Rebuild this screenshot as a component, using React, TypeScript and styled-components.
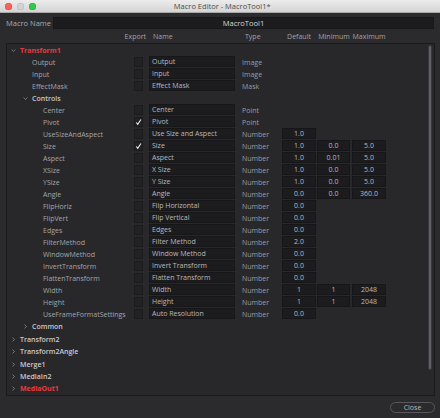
import React from 'react'
import styled, { createGlobalStyle } from 'styled-components'

const GlobalStyle = createGlobalStyle`
  html, body {
    margin: 0;
    padding: 0;
    background: #2b2b2e;
  }
  body {
    font-family: "Open Sans", "Liberation Sans", sans-serif;
    -webkit-font-smoothing: antialiased;
  }
  * {
    box-sizing: border-box;
  }
`

// Styled Components
const Window = styled.div`
  width: 440px;
  height: 418px;
  display: flex;
  flex-direction: column;
  background: #2b2b2e;
  overflow: hidden;
  color: #b4b4b6;
  font-size: 7px;
`

const TitleBar = styled.div`
  flex: none;
  height: 13px;
  display: grid;
  grid-template-columns: 1fr auto 1fr;
  align-items: center;
  padding-left: 4.5px;
  background: linear-gradient(#ececec, #d4d4d4);
  border-bottom: 1px solid #a9a9a9;
`

const Lights = styled.div`
  display: flex;
  gap: 5px;
`

const Light = styled.span<{ $color: string; $ring: string }>`
  width: 7px;
  height: 7px;
  border-radius: 50%;
  background: ${(p) => p.$color};
  box-shadow: inset 0 0 0 0.5px ${(p) => p.$ring};
`

const Title = styled.div`
  font-size: 7.5px;
  color: #4b4b4b;
  white-space: nowrap;
`

const MacroNameRow = styled.div`
  flex: none;
  display: flex;
  align-items: center;
  margin-top: 4px;
  height: 12px;
  padding: 0 6px;
`

const MacroNameLabel = styled.div`
  width: 47px;
  font-size: 7.5px;
  color: #a9a9ac;
`

const MacroNameInput = styled.div`
  flex: 1;
  height: 12px;
  background: #1c1c1e;
  border: 1px solid #18181a;
  color: #d6d6d8;
  font-size: 7.5px;
  display: flex;
  align-items: center;
  justify-content: center;
`

const columns = '127px 15px 93px 40px 35px 35px 35px'

const HeaderRow = styled.div`
  flex: none;
  height: 14px;
  display: grid;
  grid-template-columns: ${columns};
  align-items: center;
  padding-left: 7px;
  color: #a4a4a7;
`

const HeadCell = styled.div<{ $align?: string; $pad?: number; $span?: number }>`
  grid-column: span ${(p) => p.$span ?? 1};
  width: ${(p) => (p.$align === 'center' ? '34px' : 'auto')};
  text-align: ${(p) => p.$align ?? 'left'};
  padding-left: ${(p) => (p.$align === 'left' || !p.$align ? p.$pad ?? 0 : 0)}px;
  padding-right: ${(p) => (p.$align === 'right' ? p.$pad ?? 0 : 0)}px;
  white-space: nowrap;
`

const Panel = styled.div`
  flex: 1;
  position: relative;
  margin: 0 5px 0 6px;
  background: #28282b;
  border: 1px solid #1a1a1c;
  border-radius: 1px;
`

const ScrollThumb = styled.div`
  position: absolute;
  right: 2px;
  top: 1px;
  bottom: 25px;
  width: 4px;
  border-radius: 2px;
  background: #606066;
  border: 1px solid #3a3a3e;
`

const Row = styled.div<{ $h: number }>`
  height: ${(p) => p.$h}px;
  display: grid;
  grid-template-columns: ${columns};
  align-items: center;
`

const TreeLabel = styled.div<{ $indent: number; $tone: 'red' | 'group' | 'leaf' }>`
  display: flex;
  align-items: center;
  padding-left: ${(p) => p.$indent}px;
  white-space: nowrap;
  font-weight: ${(p) => (p.$tone === 'red' ? 700 : p.$tone === 'group' ? 600 : 400)};
  color: ${(p) =>
    p.$tone === 'red' ? '#e8393c' : p.$tone === 'group' ? '#c9c9cc' : '#a5a5a8'};
`

const Chevron = styled.span`
  width: 11px;
  flex: none;
  display: flex;
  align-items: center;
  padding-left: 2px;
`

const CheckBox = styled.div`
  align-self: start;
  width: 9px;
  height: 10px;
  margin-top: 1px;
  background: #222224;
  border: 1px solid #1b1b1d;
  display: flex;
  align-items: center;
  justify-content: center;
`

const Field = styled.div<{ $w: number; $center?: boolean }>`
  align-self: start;
  width: ${(p) => p.$w}px;
  height: 11px;
  background: #1c1c1e;
  border: 1px solid #17171a;
  color: #b9b9bc;
  display: flex;
  align-items: center;
  justify-content: ${(p) => (p.$center ? 'center' : 'flex-start')};
  padding-left: ${(p) => (p.$center ? 0 : 2)}px;
  white-space: nowrap;
  overflow: hidden;
`

const TypeText = styled.div`
  color: #9c9c9f;
`

const Footer = styled.div`
  flex: none;
  height: 23px;
  display: flex;
  justify-content: flex-end;
  align-items: center;
  padding-right: 5px;
`

const CloseButton = styled.button`
  width: 45px;
  height: 11px;
  padding: 0;
  border-radius: 6px;
  border: 1px solid #58585c;
  background: #2b2b2e;
  color: #b8b8ba;
  font-family: inherit;
  font-size: 7px;
  display: flex;
  align-items: center;
  justify-content: center;
`

// DATA
type Item = {
  label: string
  level: number
  group?: boolean
  open?: boolean
  red?: boolean
  checked?: boolean
  name?: string
  type?: string
  values?: string[]
  h?: number
}

const items: Item[] = [
  { label: 'Transform1', level: 0, group: true, open: true, red: true },
  { label: 'Output', level: 1, name: 'Output', type: 'Image' },
  { label: 'Input', level: 1, name: 'Input', type: 'Image' },
  { label: 'EffectMask', level: 1, name: 'Effect Mask', type: 'Mask' },
  { label: 'Controls', level: 1, group: true, open: true },
  { label: 'Center', level: 2, name: 'Center', type: 'Point' },
  { label: 'Pivot', level: 2, checked: true, name: 'Pivot', type: 'Point' },
  { label: 'UseSizeAndAspect', level: 2, name: 'Use Size and Aspect', type: 'Number', values: ['1.0'] },
  { label: 'Size', level: 2, checked: true, name: 'Size', type: 'Number', values: ['1.0', '0.0', '5.0'] },
  { label: 'Aspect', level: 2, name: 'Aspect', type: 'Number', values: ['1.0', '0.01', '5.0'] },
  { label: 'XSize', level: 2, name: 'X Size', type: 'Number', values: ['1.0', '0.0', '5.0'] },
  { label: 'YSize', level: 2, name: 'Y Size', type: 'Number', values: ['1.0', '0.0', '5.0'] },
  { label: 'Angle', level: 2, name: 'Angle', type: 'Number', values: ['0.0', '0.0', '360.0'] },
  { label: 'FlipHoriz', level: 2, name: 'Flip Horizontal', type: 'Number', values: ['0.0'] },
  { label: 'FlipVert', level: 2, name: 'Flip Vertical', type: 'Number', values: ['0.0'] },
  { label: 'Edges', level: 2, name: 'Edges', type: 'Number', values: ['0.0'] },
  { label: 'FilterMethod', level: 2, name: 'Filter Method', type: 'Number', values: ['2.0'] },
  { label: 'WindowMethod', level: 2, name: 'Window Method', type: 'Number', values: ['0.0'] },
  { label: 'InvertTransform', level: 2, name: 'Invert Transform', type: 'Number', values: ['0.0'] },
  { label: 'FlattenTransform', level: 2, name: 'Flatten Transform', type: 'Number', values: ['0.0'] },
  { label: 'Width', level: 2, name: 'Width', type: 'Number', values: ['1', '1', '2048'] },
  { label: 'Height', level: 2, name: 'Height', type: 'Number', values: ['1', '1', '2048'] },
  { label: 'UseFrameFormatSettings', level: 2, name: 'Auto Resolution', type: 'Number', values: ['0.0'] },
  { label: 'Common', level: 1, group: true, h: 13 },
  { label: 'Transform2', level: 0, group: true, h: 12.5 },
  { label: 'Transform2Angle', level: 0, group: true, h: 12.5 },
  { label: 'Merge1', level: 0, group: true, h: 12.5 },
  { label: 'MediaIn2', level: 0, group: true, h: 12 },
  { label: 'MediaOut1', level: 0, group: true, red: true, h: 12 },
]

const indents = [2, 14, 25]

const ChevronIcon: React.FC<{ open?: boolean }> = ({ open }) => (
  <svg width="5" height="5" viewBox="0 0 5 5">
    <path
      d={open ? 'M0.6 1.5 L2.5 3.5 L4.4 1.5' : 'M1.5 0.6 L3.5 2.5 L1.5 4.4'}
      fill="none"
      stroke="#8a8a8e"
      strokeWidth="0.8"
    />
  </svg>
)

const CheckMark: React.FC = () => (
  <svg width="8" height="8" viewBox="0 0 8 8">
    <path d="M1.4 4.6 L3.1 6.6 L6.8 1.2" fill="none" stroke="#f2f2f2" strokeWidth="1.2" />
  </svg>
)

// COMPONENT
const App: React.FC = () => {
  return (
    <Window>
      <GlobalStyle />
      <TitleBar>
        <Lights>
          <Light $color="#fc605b" $ring="#de4a45" />
          <Light $color="#d2d2d2" $ring="#b8b8b8" />
          <Light $color="#34c84a" $ring="#26a93a" />
        </Lights>
        <Title>Macro Editor - MacroTool1*</Title>
        <span />
      </TitleBar>

      <MacroNameRow>
        <MacroNameLabel>Macro Name</MacroNameLabel>
        <MacroNameInput>MacroTool1</MacroNameInput>
      </MacroNameRow>

      <HeaderRow>
        <HeadCell $span={2} $align="right" $pad={3}>
          Export
        </HeadCell>
        <HeadCell $pad={4}>Name</HeadCell>
        <HeadCell $pad={3}>Type</HeadCell>
        <HeadCell $align="center">Default</HeadCell>
        <HeadCell $align="center">Minimum</HeadCell>
        <HeadCell $align="center">Maximum</HeadCell>
      </HeaderRow>

      <Panel>
        {items.map((it) => (
          <Row key={it.label} $h={it.h ?? 12}>
            <TreeLabel
              $indent={indents[it.level]}
              $tone={it.red ? 'red' : it.group ? 'group' : 'leaf'}
            >
              <Chevron>{it.group && <ChevronIcon open={it.open} />}</Chevron>
              {it.label}
            </TreeLabel>
            {it.name && (
              <>
                <CheckBox>{it.checked && <CheckMark />}</CheckBox>
                <Field $w={86}>{it.name}</Field>
                <TypeText>{it.type}</TypeText>
                {(it.values ?? []).map((v, i) => (
                  <Field key={i} $w={i === 1 ? 33 : 34} $center>
                    {v}
                  </Field>
                ))}
              </>
            )}
          </Row>
        ))}
        <ScrollThumb />
      </Panel>

      <Footer>
        <CloseButton>Close</CloseButton>
      </Footer>
    </Window>
  )
}

export default App
